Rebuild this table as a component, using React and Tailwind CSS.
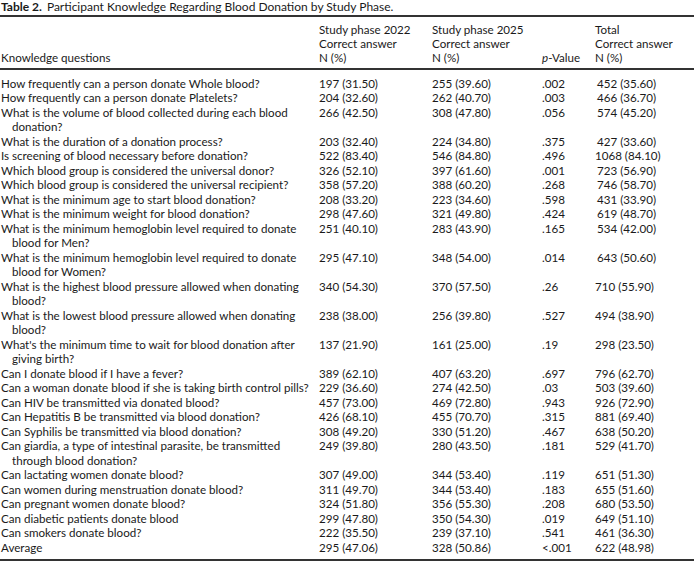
const ROWS = [
  [['How frequently can a person donate Whole blood?'], '197 (31.50)', '255 (39.60)', '.002', '452 (35.60)'],
  [['How frequently can a person donate Platelets?'], '204 (32.60)', '262 (40.70)', '.003', '466 (36.70)'],
  [['What is the volume of blood collected during each blood', 'donation?'], '266 (42.50)', '308 (47.80)', '.056', '574 (45.20)'],
  [['What is the duration of a donation process?'], '203 (32.40)', '224 (34.80)', '.375', '427 (33.60)'],
  [['Is screening of blood necessary before donation?'], '522 (83.40)', '546 (84.80)', '.496', '1068 (84.10)'],
  [['Which blood group is considered the universal donor?'], '326 (52.10)', '397 (61.60)', '.001', '723 (56.90)'],
  [['Which blood group is considered the universal recipient?'], '358 (57.20)', '388 (60.20)', '.268', '746 (58.70)'],
  [['What is the minimum age to start blood donation?'], '208 (33.20)', '223 (34.60)', '.598', '431 (33.90)'],
  [['What is the minimum weight for blood donation?'], '298 (47.60)', '321 (49.80)', '.424', '619 (48.70)'],
  [['What is the minimum hemoglobin level required to donate', 'blood for Men?'], '251 (40.10)', '283 (43.90)', '.165', '534 (42.00)'],
  [['What is the minimum hemoglobin level required to donate', 'blood for Women?'], '295 (47.10)', '348 (54.00)', '.014', '643 (50.60)'],
  [['What is the highest blood pressure allowed when donating', 'blood?'], '340 (54.30)', '370 (57.50)', '.26', '710 (55.90)'],
  [['What is the lowest blood pressure allowed when donating', 'blood?'], '238 (38.00)', '256 (39.80)', '.527', '494 (38.90)'],
  [["What's the minimum time to wait for blood donation after", 'giving birth?'], '137 (21.90)', '161 (25.00)', '.19', '298 (23.50)'],
  [['Can I donate blood if I have a fever?'], '389 (62.10)', '407 (63.20)', '.697', '796 (62.70)'],
  [['Can a woman donate blood if she is taking birth control pills?'], '229 (36.60)', '274 (42.50)', '.03', '503 (39.60)'],
  [['Can HIV be transmitted via donated blood?'], '457 (73.00)', '469 (72.80)', '.943', '926 (72.90)'],
  [['Can Hepatitis B be transmitted via blood donation?'], '426 (68.10)', '455 (70.70)', '.315', '881 (69.40)'],
  [['Can Syphilis be transmitted via blood donation?'], '308 (49.20)', '330 (51.20)', '.467', '638 (50.20)'],
  [['Can giardia, a type of intestinal parasite, be transmitted', 'through blood donation?'], '249 (39.80)', '280 (43.50)', '.181', '529 (41.70)'],
  [['Can lactating women donate blood?'], '307 (49.00)', '344 (53.40)', '.119', '651 (51.30)'],
  [['Can women during menstruation donate blood?'], '311 (49.70)', '344 (53.40)', '.183', '655 (51.60)'],
  [['Can pregnant women donate blood?'], '324 (51.80)', '356 (55.30)', '.208', '680 (53.50)'],
  [['Can diabetic patients donate blood'], '299 (47.80)', '350 (54.30)', '.019', '649 (51.10)'],
  [['Can smokers donate blood?'], '222 (35.50)', '239 (37.10)', '.541', '461 (36.30)'],
  [['Average'], '295 (47.06)', '328 (50.86)', '<.001', '622 (48.98)'],
]

const GRID = 'grid grid-cols-[319px_113px_110px_53px_1fr] whitespace-nowrap'

export default function App() {
  return (
    <div
      className="w-[694px] h-[563px] bg-white text-[#1a1a1a] text-[11.6px] leading-[14.5px] overflow-hidden"
      style={{ fontFamily: 'Lato, "Open Sans", sans-serif' }}
    >
      <div className="pl-[1px] text-[12px] leading-[14px] whitespace-nowrap">
        <span className="font-bold">Table 2.</span>
        <span className="ml-[5px]">Participant Knowledge Regarding Blood Donation by Study Phase.</span>
      </div>

      <div className="mt-[1px] h-[2px] bg-[#333]" />

      <div className={`${GRID} pt-[6px] pb-[3px] leading-[14px]`}>
        <div className="self-end pl-[1px]">Knowledge questions</div>
        <div>Study phase 2022<br />Correct answer<br />N (%)</div>
        <div>Study phase 2025<br />Correct answer<br />N (%)</div>
        <div className="self-end"><span className="italic">p</span>-Value</div>
        <div>Total<br />Correct answer<br />N (%)</div>
      </div>

      <div className="h-[1.5px] bg-[#333]" />

      <div className="pt-[7px] pb-[4px]">
        {ROWS.map(([q, a, b, p, t], i) => (
          <div key={i} className={GRID}>
            <div className="pl-[1px]">
              {q.map((line, j) => (
                <div key={j} className={j > 0 ? 'pl-[11px]' : ''}>{line}</div>
              ))}
            </div>
            <div>{a}</div>
            <div>{b}</div>
            <div>{p}</div>
            <div className={i < 11 ? 'w-[61px] text-right' : ''}>{t}</div>
          </div>
        ))}
      </div>

      <div className="h-[2px] bg-[#333]" />
    </div>
  )
}
